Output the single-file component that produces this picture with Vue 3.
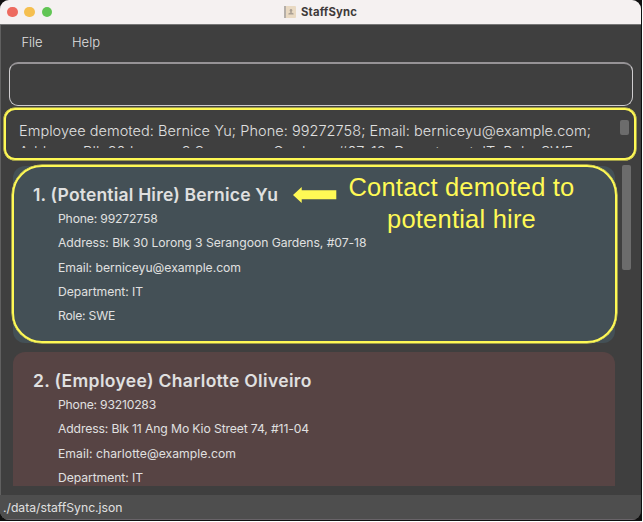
<script setup>
const people = [
  {
    kind: 'hire',
    title: { text: '1. (Potential Hire) Bernice Yu', width: 245 },
    fields: [
      { text: 'Phone: 99272758', width: 99.5 },
      { text: 'Address: Blk 30 Lorong 3 Serangoon Gardens, #07-18', width: 308.5 },
      { text: 'Email: berniceyu@example.com', width: 183 },
      { text: 'Department: IT', width: 85 },
      { text: 'Role: SWE', width: 57 },
    ],
  },
  {
    kind: 'employee',
    title: { text: '2. (Employee) Charlotte Oliveiro', width: 278.5 },
    fields: [
      { text: 'Phone: 93210283', width: 98 },
      { text: 'Address: Blk 11 Ang Mo Kio Street 74, #11-04', width: 251 },
      { text: 'Email: charlotte@example.com', width: 178 },
      { text: 'Department: IT', width: 85 },
    ],
  },
]

// Tracks a line of text so that it fills the given width.
const vFit = {
  mounted(el, { value }) {
    const natural = el.getBoundingClientRect().width
    el.style.letterSpacing = `${(value - natural) / el.textContent.length}px`
  },
}
</script>

<template>
  <div class="screen">
    <div class="window">
      <header class="titlebar">
        <div class="lights"><i class="red" /><i class="amber" /><i class="green" /></div>
        <div class="title">
          <svg width="12" height="12" viewBox="0 0 12 12">
            <rect width="12" height="12" rx="1" fill="#e9d9c2" />
            <rect width="2" height="12" fill="#b5afa9" />
            <circle cx="7" cy="4.4" r="1.3" fill="#aa9f93" />
            <path d="M6.4 5h1.2v1.600l2 .8v1.100H4.400V7.400l2-.8z" fill="#aa9f93" />
          </svg>
          <span v-fit="56">StaffSync</span>
        </div>
      </header>
      <nav class="menu"><span v-fit="21">File</span><span v-fit="28">Help</span></nav>
      <div class="command" />
      <section class="result">
        <div class="message">
          <span v-fit="572">Employee demoted: Bernice Yu; Phone: 99272758; Email: berniceyu@example.com;</span>
          <span v-fit="554">Address: Blk 30 Lorong 3 Serangoon Gardens, #07-18; Department: IT; Role: SWE</span>
        </div>
        <div class="thumb small" />
      </section>
      <main class="list">
        <div class="cards">
          <article v-for="p in people" :key="p.title.text" class="card" :class="p.kind">
            <h2><span v-fit="p.title.width">{{ p.title.text }}</span></h2>
            <p v-for="f in p.fields" :key="f.text"><span v-fit="f.width">{{ f.text }}</span></p>
          </article>
        </div>
        <div class="thumb" />
      </main>
      <footer class="status"><span v-fit="119.5">./data/staffSync.json</span></footer>
    </div>
    <div class="outline" />
    <svg class="arrow" width="44" height="16" viewBox="0 0 44 16">
      <path d="M0 8 8.700 0V3.300H43.300V12.300H8.700V16z" fill="#fff955" />
    </svg>
    <div class="note"><span v-fit="226">Contact demoted to</span><span v-fit="149">potential hire</span></div>
  </div>
</template>

<style>
body { background: #fff; overflow: hidden; }
</style>
<style scoped>
* { box-sizing: border-box; margin: 0; }
span { white-space: nowrap; }
.screen {
  position: relative;
  width: 642px;
  height: 521px;
  background: #111;
  font-family: Inter, "Liberation Sans", sans-serif;
  color: #e0e0e0;
}
.window {
  display: flex;
  flex-direction: column;
  width: 641px;
  height: 520px;
  border-radius: 9px;
  overflow: hidden;
  background: #3f3f3f;
  box-shadow: inset 1px 0 #606060;
}
.titlebar {
  display: grid;
  grid-template-columns: 284px auto 1fr;
  height: 25px;
  flex: none;
  align-items: center;
  background: #f5f1f1;
  border-bottom: 1px solid #777;
}
.lights { display: flex; gap: 6.800px; padding-left: 7px; }
.lights i { width: 10.500px; height: 10.500px; border-radius: 50%; }
.red { background: #ed6a5f; }
.amber { background: #f5bf4f; }
.green { background: #61c554; }
.title { display: flex; align-items: center; gap: 5px; font-size: 11.300px; font-weight: 700; color: #3e3a3a; }
.menu { display: flex; gap: 29.500px; height: 37px; flex: none; padding: 0 21.500px; line-height: 34px; font-size: 13px; font-weight: 300; }
.command { height: 44px; flex: none; margin: 0 8px 1px 9px; border: 1px solid #cfcdcf; border-top: 2px solid #969396; border-radius: 9px; }
.result {
  display: flex;
  justify-content: space-between;
  height: 52px;
  flex: none;
  margin: 1px 5px 1px 4px;
  border: 2px solid #fff955;
  border-radius: 11px;
  box-shadow: 0 0 0 .5px #fff955;
  padding: 10px 5px 0 13px;
}
.message { display: flex; flex-direction: column; align-items: flex-start; height: 28px; overflow: hidden; font-size: 14.500px; line-height: 21px; font-weight: 300; }
.thumb { width: 9px; height: 105px; flex: none; border-radius: 2px; background: #6c6c6c; }
.thumb.small { height: 15px; }
.list { display: flex; gap: 7px; height: 321px; flex: none; margin-top: 4px; padding-left: 13px; overflow: hidden; }
.cards { width: 602px; padding-top: 1px; }
.card { height: 177px; margin-bottom: 9px; border-radius: 12px; padding: 16px 20px 0; }
.hire { background: #445056; }
.employee { background: #574444; }
h2 { font-size: 17.500px; line-height: 25px; font-weight: 600; }
p { padding-left: 25px; font-size: 12.200px; line-height: 24.250px; font-weight: 400; }
.status { height: 25px; margin-top: auto; padding-left: 3px; background: #4e4e4e; border-bottom: 1px solid #686368; font-size: 12.200px; line-height: 25px; }
.outline { position: absolute; left: 12px; top: 165px; width: 605px; height: 178px; border: 2px solid #fff955; border-radius: 30px; box-shadow: 0 0 0 .5px #fff955; }
.arrow { position: absolute; left: 293px; top: 187px; }
.note {
  position: absolute;
  left: 348px;
  top: 171px;
  width: 227px;
  display: flex;
  flex-direction: column;
  align-items: center;
  font: 25.500px/32px "Liberation Sans", Arial, sans-serif;
  color: #fff955;
}
</style>
